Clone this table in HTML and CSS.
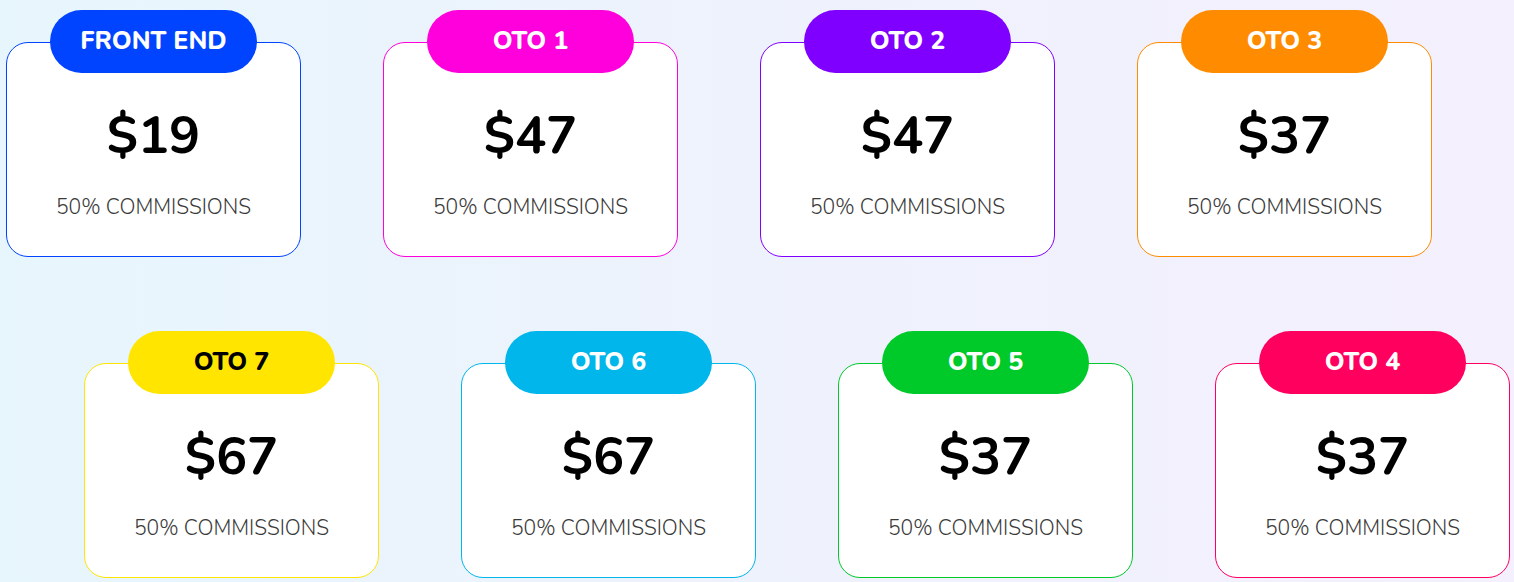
FILE: index.html
```html
<!DOCTYPE html>
<html lang="en">
<head>
<meta charset="utf-8">
<title>Funnel pricing</title>
<link rel="stylesheet" href="styles.css">
</head>
<body>
<main class="funnel">
  <section class="row row-top">
    <div class="plan plan-blue">
      <div class="badge">FRONT END</div>
      <div class="card"><div class="price">$19</div><div class="comm">50% COMMISSIONS</div></div>
    </div>
    <div class="plan plan-magenta">
      <div class="badge">OTO 1</div>
      <div class="card"><div class="price">$47</div><div class="comm">50% COMMISSIONS</div></div>
    </div>
    <div class="plan plan-purple">
      <div class="badge">OTO 2</div>
      <div class="card"><div class="price">$47</div><div class="comm">50% COMMISSIONS</div></div>
    </div>
    <div class="plan plan-orange">
      <div class="badge">OTO 3</div>
      <div class="card"><div class="price">$37</div><div class="comm">50% COMMISSIONS</div></div>
    </div>
  </section>
  <section class="row row-bottom">
    <div class="plan plan-yellow">
      <div class="badge">OTO 7</div>
      <div class="card"><div class="price">$67</div><div class="comm">50% COMMISSIONS</div></div>
    </div>
    <div class="plan plan-cyan">
      <div class="badge">OTO 6</div>
      <div class="card"><div class="price">$67</div><div class="comm">50% COMMISSIONS</div></div>
    </div>
    <div class="plan plan-green">
      <div class="badge">OTO 5</div>
      <div class="card"><div class="price">$37</div><div class="comm">50% COMMISSIONS</div></div>
    </div>
    <div class="plan plan-pink">
      <div class="badge">OTO 4</div>
      <div class="card"><div class="price">$37</div><div class="comm">50% COMMISSIONS</div></div>
    </div>
  </section>
</main>
</body>
</html>
```
FILE: styles.css
```css
* { box-sizing: border-box; }

html, body {
  margin: 0;
  height: 100%;
}

body {
  font-family: "Nunito", "Lato", "Liberation Sans", sans-serif;
  background: linear-gradient(90deg, #e7f6fc 0%, #eef2fc 50%, #f4f0fd 100%);
  overflow: hidden;
}

.funnel {
  padding-top: 10px;
  display: flex;
  flex-direction: column;
  gap: 74px;
}

.row {
  display: grid;
  grid-template-columns: repeat(4, 295px);
  column-gap: 82px;
}

.row-top { margin-left: 6px; }
.row-bottom { margin-left: 84px; }

.plan {
  display: flex;
  flex-direction: column;
  align-items: center;
  --c: #0044ff;
  --t: #ffffff;
}

.badge {
  position: relative;
  z-index: 1;
  width: 207px;
  height: 63px;
  margin-bottom: -31px;
  border-radius: 32px;
  background: var(--c);
  color: var(--t);
  font-size: 25px;
  font-weight: 800;
  display: flex;
  align-items: center;
  justify-content: center;
  padding-bottom: 2px;
}

.card {
  width: 295px;
  height: 215px;
  background: #ffffff;
  border: 1px solid var(--c);
  border-radius: 22px;
  padding-top: 67px;
  text-align: center;
}

.price {
  font-size: 52px;
  line-height: 52px;
  font-weight: 700;
  color: #000000;
}

.comm {
  margin-top: 35px;
  font-size: 21px;
  line-height: 21px;
  font-weight: 300;
  color: #3a3a3a;
}

.plan-blue { --c: #0044ff; }
.plan-magenta { --c: #ff00dc; }
.plan-purple { --c: #7f00ff; }
.plan-orange { --c: #ff8c00; }
.plan-yellow { --c: #ffe500; --t: #000000; }
.plan-cyan { --c: #00b6ea; }
.plan-green { --c: #00c92a; }
.plan-pink { --c: #ff005f; }
```
